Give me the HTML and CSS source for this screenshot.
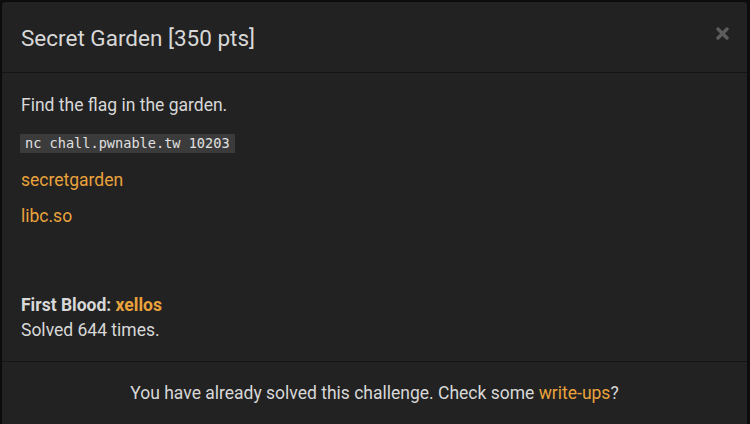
FILE: index.html
```html
<!DOCTYPE html>
<html>
<head>
<meta charset="utf-8">
<link rel="stylesheet" href="styles.css">
</head>
<body>
<div class="modal">
  <div class="modal-header">
    <h4 class="modal-title">Secret Garden [350 pts]</h4>
    <span class="close" aria-label="Close">
      <svg width="13" height="13" viewBox="0 0 13 13"><path d="M2 2 L11 11 M11 2 L2 11" stroke="#5c5c5c" stroke-width="3.4" stroke-linecap="round" fill="none"/></svg>
    </span>
  </div>
  <div class="modal-body">
    <p class="desc">Find the flag in the garden.</p>
    <p class="cmd"><code>nc chall.pwnable.tw 10203</code></p>
    <p class="file first"><a href="#">secretgarden</a></p>
    <p class="file"><a href="#">libc.so</a></p>
    <div class="stats">
      <div><strong>First Blood: <a href="#">xellos</a></strong></div>
      <div>Solved 644 times.</div>
    </div>
  </div>
  <div class="modal-footer">
    You have already solved this challenge. Check some <a href="#">write-ups</a>?
  </div>
</div>
</body>
</html>
```
FILE: styles.css
```css
html, body {
  margin: 0;
  padding: 0;
  background: #0d0d0d;
  height: 100%;
}
body {
  padding: 1px 0 0 1px;
  box-sizing: border-box;
  font-family: Roboto, "Liberation Sans", sans-serif;
  color: #d8d8d8;
}
.modal {
  width: 747px;
  height: 430px;
  background: #222222;
  border: 1px solid #0a0a0a;
  border-radius: 4px;
  box-sizing: border-box;
  display: flex;
  flex-direction: column;
}
a {
  color: #eaa23c;
  text-decoration: none;
}
.modal-header {
  height: 71px;
  box-sizing: border-box;
  border-bottom: 1px solid #141414;
  display: flex;
  align-items: center;
  justify-content: space-between;
  padding: 0 18px 0 19px;
}
.modal-title {
  margin: 0;
  font-size: 22.5px;
  font-weight: 400;
  color: #d8d8d8;
  padding-top: 1px;
}
.close {
  display: flex;
  width: 13px;
  height: 13px;
  margin-top: -8px;
}
.modal-body {
  box-sizing: border-box;
  padding: 19.5px 19px 18.5px 19px;
  font-size: 17.5px;
  line-height: 25px;
}
.modal-body p {
  margin: 0;
}
.cmd {
  margin-top: 16.5px !important;
  line-height: 19px;
  height: 19px;
}
code {
  display: inline-block;
  font-family: "DejaVu Sans Mono", monospace;
  font-size: 13.6px;
  line-height: 19px;
  height: 19px;
  background: #3b3b3b;
  color: #e0e0e0;
  padding: 0 5px;
  margin-left: -1px;
  vertical-align: top;
}
.file.first {
  margin-top: 14.5px !important;
}
.file {
  margin-top: 11px !important;
}
.stats {
  margin-top: 64px;
}
.stats strong {
  font-weight: 700;
}
.modal-footer {
  border-top: 1px solid #141414;
  text-align: center;
  padding-top: 18.5px;
  font-size: 17.5px;
  line-height: 25px;
}
```
